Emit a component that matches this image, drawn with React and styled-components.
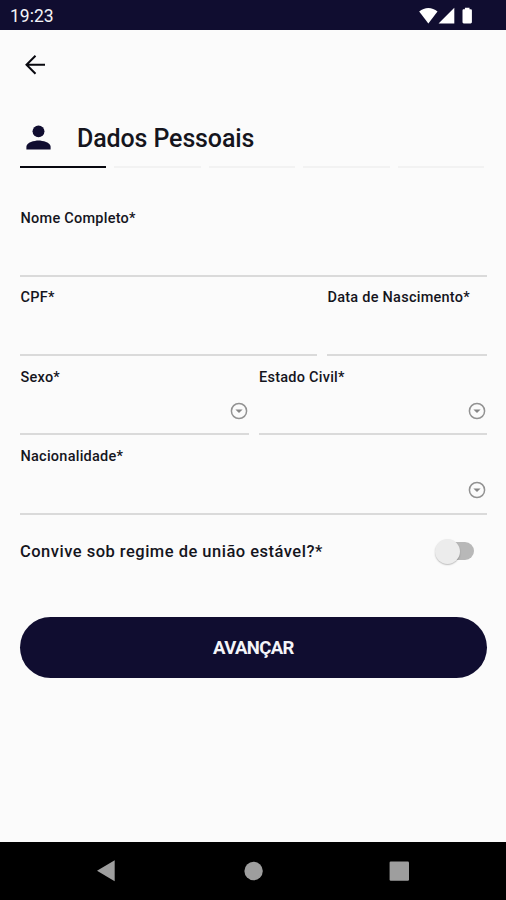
import styled, { createGlobalStyle } from "styled-components";

const App = () => {
  return (
    <Screen>
      <GlobalStyle />
      <StatusBar>
        <Clock>19:23</Clock>
        <StatusIcons />
      </StatusBar>
      <Content>
        <BackButton aria-label="Voltar">
          <svg width="22" height="22" viewBox="0 0 22 22">
            <path
              d="M21 10.700H3M11.500 1.700L2.500 10.700l9 9"
              fill="none"
              stroke="#08080f"
              strokeWidth="2"
            />
          </svg>
        </BackButton>
        <Header>
          <PersonIcon width="25" height="25" viewBox="0 0 26 26">
            <circle cx="13" cy="6.6" r="6.2" fill="#100d30" />
            <path
              d="M.4 25.6v-3.100c0-4.200 8.400-6.300 12.600-6.300s12.600 2.100 12.600 6.300v3.100z"
              fill="#100d30"
            />
          </PersonIcon>
          <Title>Dados Pessoais</Title>
        </Header>
        <Steps>
          {[0, 1, 2, 3, 4].map((step) => (
            <Step key={step} $active={step === 0} />
          ))}
        </Steps>
        <Form>
          <Row $columns="1fr">
            <Field label="Nome Completo*" />
          </Row>
          <Row $columns="297px 1fr">
            <Field label="CPF*" />
            <Field label="Data de Nascimento*" />
          </Row>
          <Row $columns="1fr 1fr">
            <Field label="Sexo*" select />
            <Field label="Estado Civil*" select />
          </Row>
          <Row $columns="1fr">
            <Field label="Nacionalidade*" select />
          </Row>
        </Form>
        <SwitchRow>
          <Question>Convive sob regime de união estável?*</Question>
          <Switch role="switch" aria-checked="false">
            <Thumb />
          </Switch>
        </SwitchRow>
        <Submit>AVANÇAR</Submit>
      </Content>
      <NavBar>
        <svg width="506" height="58" viewBox="0 0 506 58" fill="#9e9e9e">
          <path d="M114.700 18.300v21L97 28.800z" />
          <circle cx="253.600" cy="29" r="9.200" />
          <rect x="389.600" y="19.600" width="19.400" height="19.200" rx="1.200" />
        </svg>
      </NavBar>
    </Screen>
  );
};

const Field = ({ label, select }) => (
  <FieldBox>
    <Label>{label}</Label>
    {select && (
      <Chevron width="18" height="18" viewBox="0 0 18 18">
        <circle
          cx="9"
          cy="9"
          r="7.6"
          fill="none"
          stroke="#929292"
          strokeWidth="1.5"
        />
        <path d="M5.4 7.400h7.200L9 11z" fill="#868686" />
      </Chevron>
    )}
  </FieldBox>
);

const StatusIcons = () => (
  <svg width="56" height="18" viewBox="0 0 56 18" fill="#fff">
    <path d="M.2 4.600C5.500-.2 13.200-.2 18.500 4.600L9.350 16.500z" />
    <path d="M35.300.800v15.600H19.600z" />
    <path d="M45.900.800h4.600v1.400h1.100c.8 0 1.300.5 1.300 1.300v11.600c0 .8-.5 1.300-1.300 1.300h-6.800c-.8 0-1.300-.5-1.300-1.300V3.500c0-.8.500-1.300 1.300-1.300h1.100z" />
  </svg>
);

const GlobalStyle = createGlobalStyle`
  * {
    box-sizing: border-box;
  }
  body {
    margin: 0;
    font-family: Roboto, "Liberation Sans", sans-serif;
    color: #15151d;
  }
`;

const Screen = styled.div`
  width: 506px;
  height: 900px;
  display: flex;
  flex-direction: column;
  background-color: #fbfbfb;
  overflow: hidden;
`;
const StatusBar = styled.div`
  flex: none;
  height: 29.5px;
  padding: 2px 31px 0 10px;
  display: flex;
  align-items: center;
  justify-content: space-between;
  background-color: #100d30;
`;
const Clock = styled.span`
  font-size: 17.5px;
  font-weight: 400;
  color: #f4f4f8;
`;
const Content = styled.main`
  flex: 1;
  padding: 0 19px 0 20px;
`;
const BackButton = styled.button`
  display: block;
  width: 22px;
  height: 22px;
  margin: 24px 0 0 4px;
  padding: 0;
  border: 0;
  background: none;
`;
const Header = styled.header`
  height: 34px;
  margin-top: 45px;
  padding-left: 6px;
  display: flex;
  align-items: center;
  gap: 26px;
`;
const PersonIcon = styled.svg`
  flex: none;
  margin-bottom: 1px;
`;
const Title = styled.h1`
  margin: 2px 0 0;
  font-size: 25px;
  font-weight: 500;
  letter-spacing: -0.12px;
  white-space: nowrap;
`;
const Steps = styled.div`
  margin-top: 11px;
  width: 464px;
  display: grid;
  grid-template-columns: repeat(5, 1fr);
  gap: 8px;
`;
const Step = styled.div`
  height: 2px;
  background-color: ${({ $active }) => ($active ? "#08080f" : "#f2f2f2")};
`;
const Form = styled.form`
  margin-top: 30px;
`;
const Row = styled.div`
  display: grid;
  grid-template-columns: ${({ $columns }) => $columns};
  column-gap: 10px;
`;
const FieldBox = styled.label`
  height: 79.3px;
  padding: 12.5px 1px 0 0.5px;
  display: flex;
  flex-direction: column;
  border-bottom: 2px solid #dadada;
`;
const Label = styled.span`
  font-size: 14.5px;
  font-weight: 500;
  line-height: 18px;
  letter-spacing: 0.25px;
  white-space: nowrap;
`;
const Chevron = styled.svg`
  align-self: flex-end;
  margin-top: 15px;
`;
const SwitchRow = styled.div`
  height: 26px;
  margin-top: 23.5px;
  padding-right: 13.5px;
  display: flex;
  align-items: center;
  justify-content: space-between;
`;
const Question = styled.span`
  padding-top: 1px;
  font-size: 16.5px;
  font-weight: 500;
  letter-spacing: 0.49px;
  white-space: nowrap;
`;
const Switch = styled.div`
  width: 35px;
  height: 18px;
  display: flex;
  align-items: center;
  border-radius: 9px;
  background-color: #b8b8b8;
`;
const Thumb = styled.div`
  flex: none;
  width: 25px;
  height: 25px;
  margin-left: -4px;
  border-radius: 50%;
  background-color: #ececec;
  box-shadow: 0 1px 1.5px rgba(0, 0, 0, 0.25);
`;
const Submit = styled.button`
  display: block;
  width: 467px;
  height: 61px;
  margin-top: 52.5px;
  padding: 1px 0 0;
  border: 0;
  border-radius: 31px;
  font-family: inherit;
  font-size: 18.5px;
  font-weight: 700;
  letter-spacing: -0.6px;
  color: #f4f4f8;
  background-color: #100d30;
`;
const NavBar = styled.nav`
  flex: none;
  height: 58px;
  background-color: #000;
`;

export default App;
